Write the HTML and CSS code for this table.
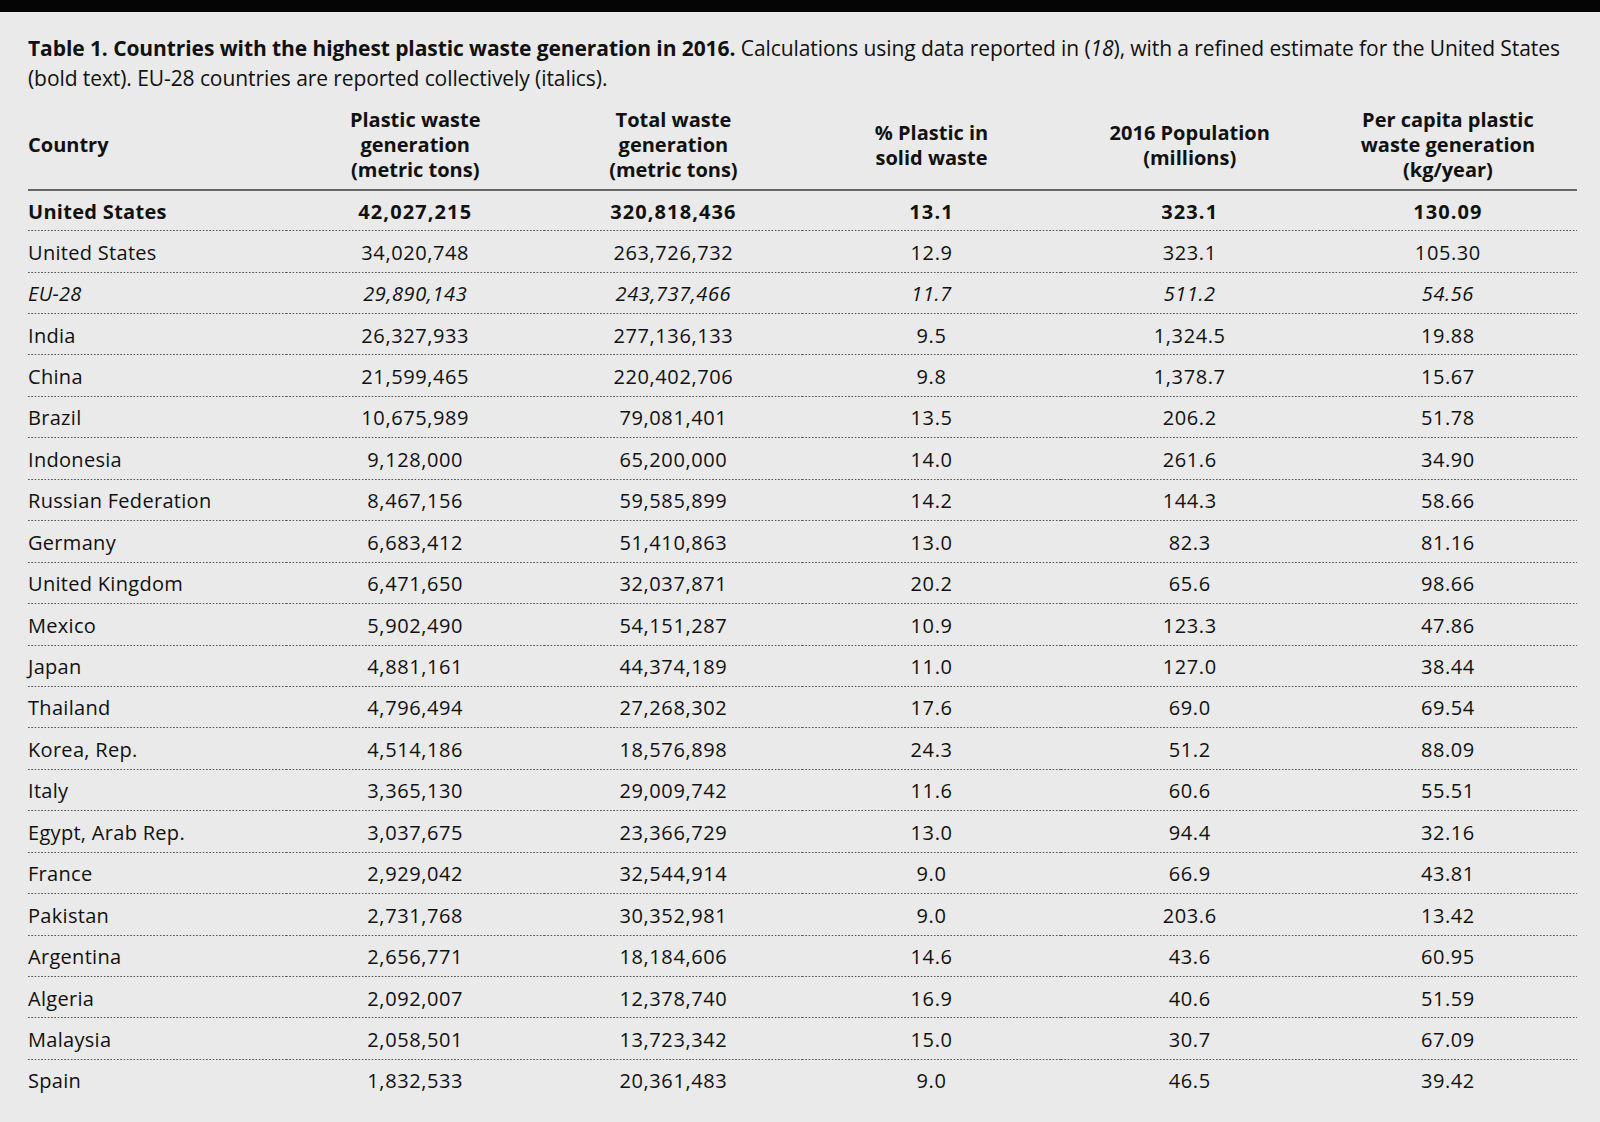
FILE: index.html
```html
<!DOCTYPE html>
<html lang="en">
<head>
<meta charset="utf-8">
<title>Table 1</title>
<link rel="stylesheet" href="styles.css">
</head>
<body>
<div class="topbar"></div>
<main class="page">
  <p class="caption"><b>Table 1. Countries with the highest plastic waste generation in 2016.</b> Calculations using data reported in (<i>18</i>), with a refined estimate for the United States (bold text). EU-28 countries are reported collectively (italics).</p>
  <table class="data">
    <thead>
      <tr>
        <th class="first">Country</th>
        <th>Plastic waste<br>generation<br>(metric tons)</th>
        <th>Total waste<br>generation<br>(metric tons)</th>
        <th>% Plastic in<br>solid waste</th>
        <th>2016 Population<br>(millions)</th>
        <th>Per capita plastic<br>waste generation<br>(kg/year)</th>
      </tr>
    </thead>
    <tbody>
      <tr class="bold"><td>United States</td><td>42,027,215</td><td>320,818,436</td><td>13.1</td><td>323.1</td><td>130.09</td></tr>
      <tr><td>United States</td><td>34,020,748</td><td>263,726,732</td><td>12.9</td><td>323.1</td><td>105.30</td></tr>
      <tr class="ital"><td>EU-28</td><td>29,890,143</td><td>243,737,466</td><td>11.7</td><td>511.2</td><td>54.56</td></tr>
      <tr><td>India</td><td>26,327,933</td><td>277,136,133</td><td>9.5</td><td>1,324.5</td><td>19.88</td></tr>
      <tr><td>China</td><td>21,599,465</td><td>220,402,706</td><td>9.8</td><td>1,378.7</td><td>15.67</td></tr>
      <tr><td>Brazil</td><td>10,675,989</td><td>79,081,401</td><td>13.5</td><td>206.2</td><td>51.78</td></tr>
      <tr><td>Indonesia</td><td>9,128,000</td><td>65,200,000</td><td>14.0</td><td>261.6</td><td>34.90</td></tr>
      <tr><td>Russian Federation</td><td>8,467,156</td><td>59,585,899</td><td>14.2</td><td>144.3</td><td>58.66</td></tr>
      <tr><td>Germany</td><td>6,683,412</td><td>51,410,863</td><td>13.0</td><td>82.3</td><td>81.16</td></tr>
      <tr><td>United Kingdom</td><td>6,471,650</td><td>32,037,871</td><td>20.2</td><td>65.6</td><td>98.66</td></tr>
      <tr><td>Mexico</td><td>5,902,490</td><td>54,151,287</td><td>10.9</td><td>123.3</td><td>47.86</td></tr>
      <tr><td>Japan</td><td>4,881,161</td><td>44,374,189</td><td>11.0</td><td>127.0</td><td>38.44</td></tr>
      <tr><td>Thailand</td><td>4,796,494</td><td>27,268,302</td><td>17.6</td><td>69.0</td><td>69.54</td></tr>
      <tr><td>Korea, Rep.</td><td>4,514,186</td><td>18,576,898</td><td>24.3</td><td>51.2</td><td>88.09</td></tr>
      <tr><td>Italy</td><td>3,365,130</td><td>29,009,742</td><td>11.6</td><td>60.6</td><td>55.51</td></tr>
      <tr><td>Egypt, Arab Rep.</td><td>3,037,675</td><td>23,366,729</td><td>13.0</td><td>94.4</td><td>32.16</td></tr>
      <tr><td>France</td><td>2,929,042</td><td>32,544,914</td><td>9.0</td><td>66.9</td><td>43.81</td></tr>
      <tr><td>Pakistan</td><td>2,731,768</td><td>30,352,981</td><td>9.0</td><td>203.6</td><td>13.42</td></tr>
      <tr><td>Argentina</td><td>2,656,771</td><td>18,184,606</td><td>14.6</td><td>43.6</td><td>60.95</td></tr>
      <tr><td>Algeria</td><td>2,092,007</td><td>12,378,740</td><td>16.9</td><td>40.6</td><td>51.59</td></tr>
      <tr><td>Malaysia</td><td>2,058,501</td><td>13,723,342</td><td>15.0</td><td>30.7</td><td>67.09</td></tr>
      <tr class="last"><td>Spain</td><td>1,832,533</td><td>20,361,483</td><td>9.0</td><td>46.5</td><td>39.42</td></tr>
    </tbody>
  </table>
</main>
</body>
</html>
```

FILE: styles.css
```css
html, body {
  margin: 0;
  padding: 0;
}
body {
  background: #e9eae9;
  color: #111;
  font-family: "Open Sans", "Noto Sans", sans-serif;
  width: 1600px;
  height: 1122px;
  overflow: hidden;
}
.topbar {
  height: 12px;
  background: #050505;
}
.page {
  padding: 21px 23px 0 28px;
}
.caption {
  margin: 0 0 7px 0;
  font-size: 21px;
  line-height: 30px;
  letter-spacing: -0.08px;
}
.caption b {
  font-weight: 700;
}
.data {
  width: 1549px;
  border-collapse: collapse;
  table-layout: fixed;
}
.data th {
  font-weight: 700;
  font-size: 20px;
  line-height: 25px;
  padding: 7px 0;
  height: 75px;
  text-align: center;
  vertical-align: middle;
  border-bottom: 2px solid #666;
  box-sizing: content-box;
}
.data th.first,
.data td:first-child {
  text-align: left;
}
.data td {
  font-size: 20px;
  height: 41.45px;
  padding: 0;
  box-sizing: border-box;
  text-align: center;
  vertical-align: middle;
  letter-spacing: 0.6px;
  background-image: linear-gradient(to right, #555 50%, transparent 50%);
  background-size: 3.3px 1.3px;
  background-repeat: repeat-x;
  background-position: left bottom;
}
.data td:first-child {
  letter-spacing: 0.3px;
}
.data tr.last td {
  background-image: none;
}
.data tr.bold td {
  font-weight: 700;
  letter-spacing: 1.1px;
}
.data tr.bold td:first-child {
  letter-spacing: 0.3px;
}
.data tr.ital td {
  font-style: italic;
}
```
